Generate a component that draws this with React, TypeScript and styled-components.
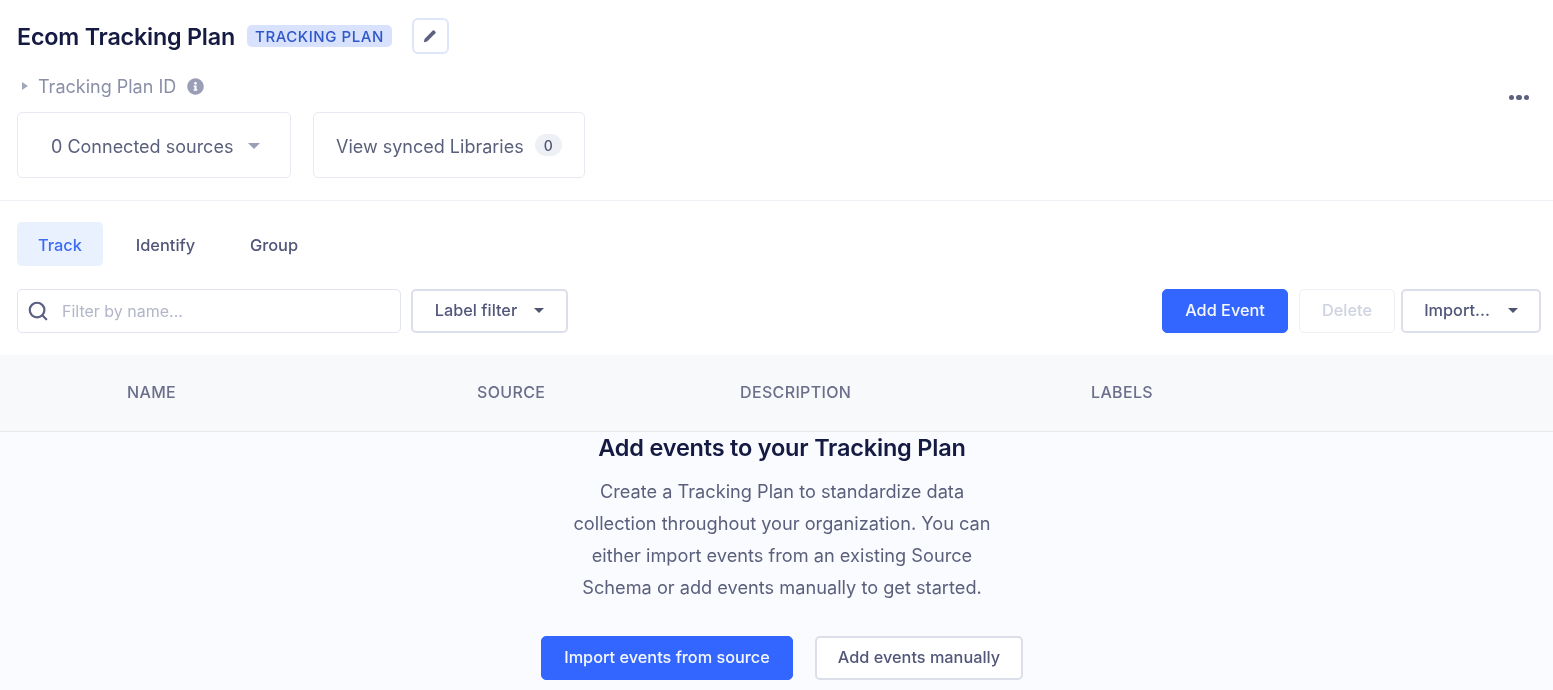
import styled, { createGlobalStyle } from 'styled-components';
import { FaInfoCircle } from 'react-icons/fa';
import { Search } from 'lucide-react';

const GlobalStyle = createGlobalStyle`
  * { box-sizing: border-box; }
  html, body { margin: 0; padding: 0; height: 690px; overflow: hidden; background: #fff; }
  body { font-family: Inter, "Liberation Sans", sans-serif; color: #4f5470; }
`;

const Page = styled.div`
  width: 1553px;
  height: 690px;
  overflow: hidden;
  filter: blur(0.45px);
`;

const Header = styled.header`
  height: 201px;
  padding: 18px 24px 0 17px;
  display: flex;
  justify-content: space-between;
  border-bottom: 1px solid #f0f1f6;
`;

const HeaderMain = styled.div`
  display: flex;
  flex-direction: column;
`;

const TitleRow = styled.div`
  display: flex;
  align-items: center;
  height: 36px;
`;

const Title = styled.h1`
  margin: 0;
  font-size: 23.3px;
  font-weight: 600;
  letter-spacing: -0.2px;
  color: #141a42;
`;

const Badge = styled.span`
  margin-left: 12px;
  width: 145px;
  height: 22px;
  display: flex;
  align-items: center;
  justify-content: center;
  border-radius: 5px;
  background: #d8e2fd;
  color: #2f57c9;
  font-size: 15px;
  font-weight: 500;
  letter-spacing: 0.55px;
`;

const EditButton = styled.button`
  margin-left: 20px;
  width: 37px;
  height: 36px;
  padding: 0;
  display: flex;
  align-items: center;
  justify-content: center;
  background: #fff;
  border: 2px solid #dfe6fb;
  border-radius: 6px;
  color: #5c6180;
`;

const IdRow = styled.div`
  margin-top: 20px;
  height: 24px;
  display: flex;
  align-items: center;
  color: #8a8fa8;
  font-size: 18px;
`;

const Caret = styled.span<{ $color?: string; $size?: number; $gap?: number }>`
  display: block;
  flex: none;
  margin-left: ${({ $gap }) => $gap ?? 0}px;
  border-left: ${({ $size }) => $size ?? 6}px solid transparent;
  border-right: ${({ $size }) => $size ?? 6}px solid transparent;
  border-top: ${({ $size }) => ($size ?? 6) * 1.15}px solid ${({ $color }) => $color ?? '#4f5470'};
`;

const SideCaret = styled.span`
  display: block;
  margin: 0 10px 0 5px;
  border-top: 4px solid transparent;
  border-bottom: 4px solid transparent;
  border-left: 6px solid #a3a7bb;
`;

const InfoIcon = styled(FaInfoCircle)`
  margin-left: 11px;
  width: 17px;
  height: 17px;
  color: #9a9eb6;
`;

const CardRow = styled.div`
  margin-top: 14px;
  display: flex;
  gap: 22px;
`;

const StatCard = styled.div<{ $width: number; $inset: number }>`
  width: ${({ $width }) => $width}px;
  height: 66px;
  padding: 2px 0 0 ${({ $inset }) => $inset}px;
  display: flex;
  align-items: center;
  background: #fff;
  border: 1px solid #e8e9f1;
  border-radius: 5px;
  color: #5a5f7b;
  font-size: 18px;
`;

const Count = styled.span`
  margin: -2px 0 0 11px;
  width: 27px;
  height: 22px;
  display: flex;
  align-items: center;
  justify-content: center;
  border-radius: 11px;
  background: #eef0f6;
  color: #4f5470;
  font-size: 14px;
  font-weight: 500;
`;

const MoreDots = styled.div`
  margin-top: 77px;
  height: 6px;
  display: flex;
  gap: 2px;
`;

const Dot = styled.span`
  width: 5.4px;
  height: 5.4px;
  border-radius: 50%;
  background: #5c6180;
`;

const Tabs = styled.nav`
  margin: 21px 0 0 17px;
  display: flex;
`;

const Tab = styled.div<{ $active?: boolean; $width: number }>`
  width: ${({ $width }) => $width}px;
  height: 44px;
  padding-top: 1px;
  display: flex;
  align-items: center;
  justify-content: center;
  border-radius: 5px;
  background: ${({ $active }) => ($active ? '#e9f0fe' : 'transparent')};
  color: ${({ $active }) => ($active ? '#3f6cf6' : '#52577a')};
  font-size: 16.4px;
  font-weight: 500;
`;

const Toolbar = styled.div`
  margin-top: 23px;
  padding: 0 12px 0 17px;
  display: flex;
  align-items: center;
`;

const SearchBox = styled.div`
  width: 384px;
  height: 44px;
  padding-left: 9px;
  display: flex;
  align-items: center;
  background: #fff;
  border: 1px solid #e1e3ed;
  border-radius: 5px;
`;

const SearchIcon = styled(Search)`
  flex: none;
  color: #5c6180;
`;

const SearchInput = styled.input`
  margin-left: 13px;
  flex: 1;
  min-width: 0;
  padding: 0;
  border: 0;
  outline: 0;
  background: transparent;
  font: 400 16px Inter, "Liberation Sans", sans-serif;

  &::placeholder {
    color: #b3b6c8;
    opacity: 1;
  }
`;

const Button = styled.button<{ $variant?: 'primary' | 'disabled'; $width: number; $left?: number }>`
  width: ${({ $width }) => $width}px;
  height: 44px;
  margin-left: ${({ $left }) => $left ?? 0}px;
  padding: 0 0 2px;
  display: flex;
  align-items: center;
  justify-content: center;
  flex: none;
  border-radius: 5px;
  font: 500 16.3px Inter, "Liberation Sans", sans-serif;
  background: ${({ $variant }) => ($variant === 'primary' ? '#3366ff' : '#fff')};
  color: ${({ $variant }) =>
    $variant === 'primary' ? '#f4f7ff' : $variant === 'disabled' ? '#cfd2e0' : '#52577a'};
  border: ${({ $variant }) =>
    $variant === 'primary'
      ? '1px solid #3366ff'
      : $variant === 'disabled'
        ? '1px solid #eeeff5'
        : '2px solid #dcdee9'};
`;

const Spacer = styled.div`
  flex: 1;
`;

const TableHead = styled.div`
  margin-top: 22px;
  height: 77px;
  padding: 0 0 2px 127px;
  display: grid;
  grid-template-columns: 350px 263px 351px 1fr;
  align-items: center;
  background: #f8f9fb;
  border-bottom: 1px solid #e7e8ee;
`;

const HeadCell = styled.div`
  color: #6b6f8c;
  font-size: 16px;
  font-weight: 500;
  letter-spacing: 0.35px;
`;

const Empty = styled.section`
  height: 259px;
  padding: 1px 0 0 11px;
  display: flex;
  flex-direction: column;
  align-items: center;
  background: #fafbff;
`;

const EmptyTitle = styled.h2`
  margin: 0;
  height: 30px;
  line-height: 30px;
  font-size: 23.5px;
  font-weight: 600;
  letter-spacing: -0.2px;
  color: #141a42;
`;

const EmptyText = styled.p`
  margin: 12px 0 0;
  width: 470px;
  text-align: center;
  font-size: 18.2px;
  line-height: 32px;
  color: #5a5f7b;
`;

const EmptyActions = styled.div`
  margin-top: 33px;
  display: flex;
  gap: 22px;
`;

export default function App() {
  return (
    <Page>
      <GlobalStyle />
      <Header>
        <HeaderMain>
          <TitleRow>
            <Title>Ecom Tracking Plan</Title>
            <Badge>TRACKING PLAN</Badge>
            <EditButton aria-label="Edit">
              <svg width="16" height="16" viewBox="0 0 16 16" fill="currentColor">
                <path d="M1.8 14.2l.7-3.3 8.3-8.3a1 1 0 0 1 1.4 0l1.2 1.2a1 1 0 0 1 0 1.4l-8.3 8.3z" />
              </svg>
            </EditButton>
          </TitleRow>
          <IdRow>
            <SideCaret />
            Tracking Plan ID
            <InfoIcon />
          </IdRow>
          <CardRow>
            <StatCard $width={274} $inset={33}>
              0 Connected sources
              <Caret $color="#9a9eb6" $gap={15} />
            </StatCard>
            <StatCard $width={272} $inset={22}>
              View synced Libraries
              <Count>0</Count>
            </StatCard>
          </CardRow>
        </HeaderMain>
        <MoreDots>
          <Dot />
          <Dot />
          <Dot />
        </MoreDots>
      </Header>

      <Tabs>
        <Tab $active $width={86}>Track</Tab>
        <Tab $width={125}>Identify</Tab>
        <Tab $width={92}>Group</Tab>
      </Tabs>

      <Toolbar>
        <SearchBox>
          <SearchIcon size={22} strokeWidth={2.4} />
          <SearchInput placeholder="Filter by name..." />
        </SearchBox>
        <Button $width={157} $left={10}>
          Label filter
          <Caret $size={5} $gap={17} />
        </Button>
        <Spacer />
        <Button $variant="primary" $width={126}>Add Event</Button>
        <Button $variant="disabled" $width={96} $left={11}>Delete</Button>
        <Button $width={140} $left={6}>
          Import...
          <Caret $size={5} $gap={18} />
        </Button>
      </Toolbar>

      <TableHead>
        <HeadCell>NAME</HeadCell>
        <HeadCell>SOURCE</HeadCell>
        <HeadCell>DESCRIPTION</HeadCell>
        <HeadCell>LABELS</HeadCell>
      </TableHead>

      <Empty>
        <EmptyTitle>Add events to your Tracking Plan</EmptyTitle>
        <EmptyText>
          Create a Tracking Plan to standardize data
          <br />
          collection throughout your organization. You can
          <br />
          either import events from an existing Source
          <br />
          Schema or add events manually to get started.
        </EmptyText>
        <EmptyActions>
          <Button $variant="primary" $width={252}>Import events from source</Button>
          <Button $width={208}>Add events manually</Button>
        </EmptyActions>
      </Empty>
    </Page>
  );
}
